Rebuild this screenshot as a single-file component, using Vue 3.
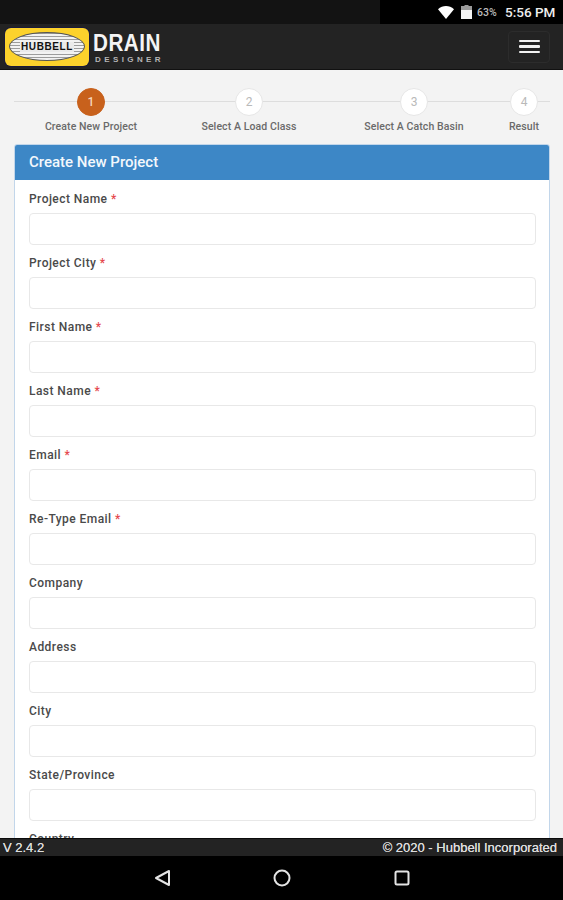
<script setup>
const steps = [
  { n: 1, label: 'Create New Project', active: true, w: 154 },
  { n: 2, label: 'Select A Load Class', w: 162 },
  { n: 3, label: 'Select A Catch Basin', w: 168 },
  { n: 4, label: 'Result', w: 52 },
]
const fields = [
  ['Project Name', true], ['Project City', true], ['First Name', true], ['Last Name', true],
  ['Email', true], ['Re-Type Email', true], ['Company', false], ['Address', false],
  ['City', false], ['State/Province', false], ['Country', false],
]
</script>

<template>
  <div class="screen">
    <div class="status">
      <div class="status-black">
        <svg class="wifi" width="16" height="13" viewBox="0 0 16 13"><path d="M0 3.2C4.6-1 11.4-1 16 3.2L8 13z" fill="#fff"/></svg>
        <svg class="battery" width="11" height="14" viewBox="0 0 11 14"><path d="M3.5 0h4v1H11v13H0V1h3.500z" fill="#9a9a9a"/><path d="M0 5h11v9H0z" fill="#f4f4f4"/></svg>
        <span class="pct">63%</span>
        <span class="clock">5:56 PM</span>
      </div>
    </div>
    <header class="appbar">
      <div class="logo">
        <div class="badge">
          <div class="oval"><span>HUBBELL</span></div>
        </div>
        <div class="brand">
          <div class="drain">DRAIN</div>
          <div class="designer">DESIGNER</div>
        </div>
      </div>
      <button class="menu" aria-label="Menu"><i></i><i></i><i></i></button>
    </header>

    <main class="content">
      <div class="steps">
        <div v-for="s in steps" :key="s.n" class="step" :class="{ active: s.active }" :style="{ width: s.w + 'px' }">
          <div class="dot">{{ s.n }}</div>
          <div class="step-label">{{ s.label }}</div>
        </div>
      </div>
      <section class="panel">
        <h1 class="panel-title">Create New Project</h1>
        <form class="form">
          <div v-for="f in fields" :key="f[0]" class="field">
            <label>{{ f[0] }}<span v-if="f[1]" class="req"> *</span></label>
            <div class="input"></div>
          </div>
        </form>
      </section>
    </main>

    <footer class="foot">
      <span>V 2.4.2</span>
      <span>© 2020 - Hubbell Incorporated</span>
    </footer>
    <nav class="nav">
      <svg width="16" height="18" viewBox="0 0 16 18"><path d="M15 2v14L2 9z" fill="none" stroke="#e4e4e4" stroke-width="2" stroke-linejoin="round"/></svg>
      <svg width="18" height="18" viewBox="0 0 18 18"><circle cx="9" cy="9" r="7.5" fill="none" stroke="#e4e4e4" stroke-width="2"/></svg>
      <svg width="16" height="16" viewBox="0 0 16 16"><rect x="1.500" y="1.500" width="13" height="13" rx="1.500" fill="none" stroke="#e4e4e4" stroke-width="2"/></svg>
    </nav>
  </div>
</template>

<style>
html, body { margin: 0; background: #000; }
</style>

<style scoped>
.screen {
  width: 563px; height: 900px; display: flex; flex-direction: column; overflow: hidden;
  font-family: Roboto, "Liberation Sans", sans-serif; background: #f3f3f3;
}
.status { height: 24px; background: #131313; display: flex; justify-content: flex-end; flex: none; }
.status-black {
  width: 183px; background: #000; display: flex; align-items: center; box-sizing: border-box; padding-left: 58px; color: #eee;
}
.wifi { margin-right: 7px; }
.battery { margin-right: 5px; }
.pct { font-size: 10.500px; color: #bbb; margin-right: 7px; font-weight: 500; width: 21px; white-space: nowrap; }
.clock { font-size: 13.500px; font-weight: 500; white-space: nowrap; }

.appbar {
  height: 46px; flex: none; background: #232323; display: flex; align-items: center; justify-content: space-between;
  padding: 0 13px 0 5px; box-sizing: border-box; border-bottom: 1px solid #111;
}
.logo { display: flex; align-items: center; gap: 4px; }
.badge {
  width: 84px; height: 38px; background: #fcd22c; border-radius: 6px; display: flex; align-items: center; justify-content: center;
  box-shadow: 0 0 0 1px #1a1a3a;
}
.oval {
  width: 76px; height: 29px; border-radius: 50%;
  background: repeating-linear-gradient(0deg, #f2f2f2 0 2px, #9c9c9c 2px 3px);
  border: 1px solid #555; box-sizing: border-box; display: flex; align-items: center; justify-content: center;
}
.oval span {
  font-size: 10px; font-weight: 700; color: #111; background: #eaeaea; line-height: 10px; padding: 0 1px; letter-spacing: .6px;
  font-family: "Liberation Sans", sans-serif;
}
.brand { color: #f4f4f4; display: flex; flex-direction: column; }
.drain { font-size: 24px; line-height: 24px; font-weight: 700; font-family: "Liberation Sans", sans-serif; transform: scaleX(.86); transform-origin: left; letter-spacing: .6px; height: 24px; margin-top: 2px; }
.designer { font-size: 8px; line-height: 9px; letter-spacing: 3.400px; color: #b5b5b5; font-weight: 700; font-family: "Liberation Sans", sans-serif; margin-left: 2px; }
.menu {
  width: 42px; height: 32px; padding: 0; background: transparent; border: 1px solid #2c2c2c; border-radius: 4px;
  display: flex; flex-direction: column; justify-content: center; align-items: center; gap: 3px;
}
.menu i { display: block; width: 21px; height: 2.500px; background: #f2f2f2; border-radius: 1px; }

.content { flex: 1; min-height: 0; overflow: hidden; padding: 18px 13px 0 14px; }
.steps { display: flex; height: 56px; }
.step { display: flex; flex-direction: column; align-items: center; position: relative; flex: none; }
.step::before {
  content: ""; position: absolute; top: 13px; left: 0; right: 0; height: 1px; background: #ddd;
}
.dot {
  width: 28px; height: 28px; border-radius: 50%; background: #fff; color: #b9b9b9; font-size: 12px;
  display: flex; align-items: center; justify-content: center; position: relative; border: 1px solid #e6e6e6; box-sizing: border-box;
}
.active .dot { background: #c8611c; color: #f6d6bd; border-color: #c8611c; font-weight: 500; }
.step-label { font-size: 10.500px; color: #6a6a6a; margin-top: 4px; line-height: 14px; white-space: nowrap; letter-spacing: .1px; font-weight: 500; }

.panel {
  width: 536px; background: #fff; border: 1px solid #c2d6ea; border-radius: 3px; box-sizing: border-box; overflow: hidden;
}
.panel-title {
  margin: -1px -1px 0; height: 36px; background: #3d87c6; color: #f3f8fc; font-size: 15px; font-weight: 500; line-height: 36px; padding-left: 15px;
}
.form { padding: 11px 13px 0 14px; }
.field { height: 64px; }
label { display: block; font-size: 12px; line-height: 16px; height: 22px; color: #4a4a4a; font-weight: 500; letter-spacing: .45px; }
.req { color: #e5484d; }
.input { height: 32px; border: 1px solid #e8e8e8; border-radius: 4px; background: #fff; box-sizing: border-box; }

.foot {
  flex: none; height: 18px; background: #232323; border-top: 1px solid #0b0b0b; box-sizing: border-box; color: #ddd;
  display: flex; justify-content: space-between; align-items: center; padding: 0 6px 0 3px; font-size: 13px; font-family: "Liberation Sans", sans-serif; text-shadow: 0 0 .6px #ddd;
}
.nav {
  flex: none; height: 44px; background: #000; display: flex; align-items: center; gap: 103px; padding-left: 154px; box-sizing: border-box;
}
</style>
